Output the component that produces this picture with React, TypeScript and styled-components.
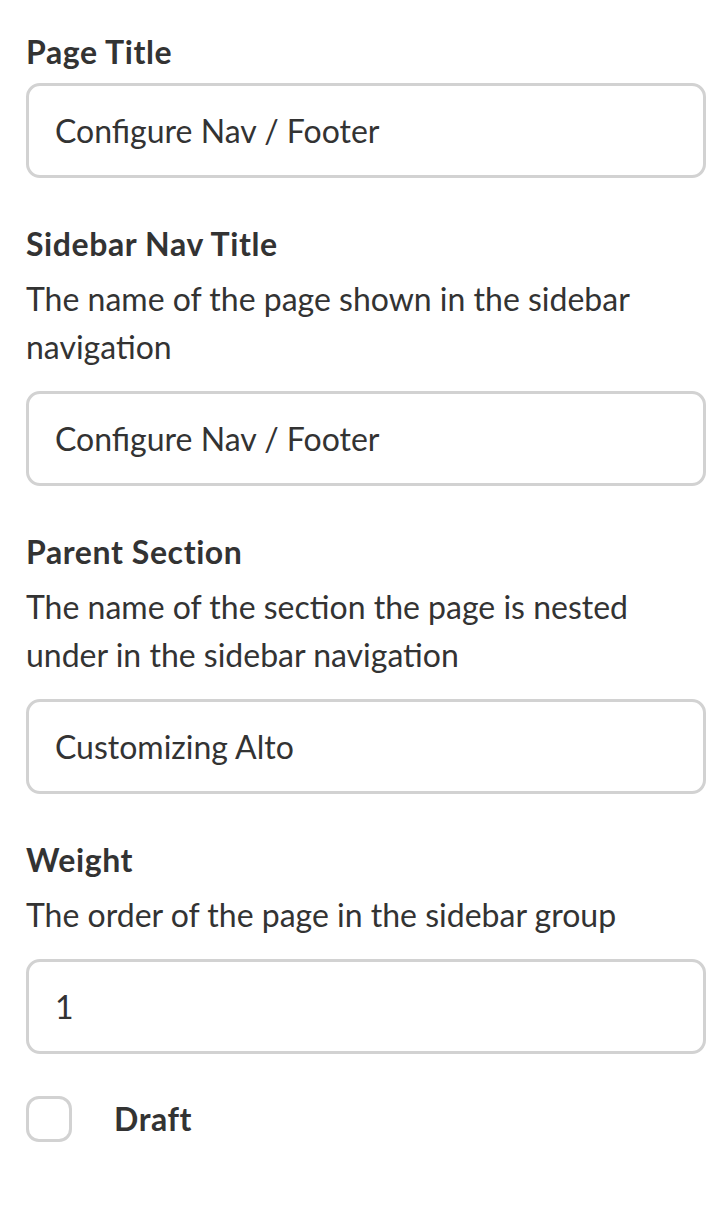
import React from "react";
import styled, { createGlobalStyle } from "styled-components";

const Global = createGlobalStyle`
  html, body { margin: 0; padding: 0; background: #ffffff; }
  body { font-family: Lato, "Noto Sans", sans-serif; color: #333333; }
`;

const Form = styled.form`
  padding: 28px 16px 40px 26px;
  display: flex;
  flex-direction: column;
  gap: 42px;
`;

const Field = styled.div`
  display: flex;
  flex-direction: column;
`;

const Label = styled.label`
  font-size: 32px;
  line-height: 48px;
  font-weight: 700;
  letter-spacing: 0.6px;
  color: #333333;
  margin-bottom: 7px;
`;

const Description = styled.p`
  margin: 0 0 20px;
  font-size: 32px;
  line-height: 48px;
  font-weight: 400;
  color: #333333;
`;

const Input = styled.input`
  box-sizing: border-box;
  width: 100%;
  height: 95px;
  border: 3px solid #d2d2d2;
  border-radius: 14px;
  padding: 0 26px;
  font-family: Lato, "Noto Sans", sans-serif;
  font-size: 32px;
  color: #333333;
  background: #ffffff;
  outline: none;
`;

const CheckRow = styled.label`
  display: flex;
  align-items: center;
  gap: 42px;
  margin-top: -1px;
`;

const Box = styled.input.attrs({ type: "checkbox" })`
  appearance: none;
  margin: 0;
  box-sizing: border-box;
  width: 46px;
  height: 46px;
  border: 3px solid #d2d2d2;
  border-radius: 13px;
  background: #ffffff;
`;

const CheckText = styled.span`
  font-size: 32px;
  line-height: 48px;
  font-weight: 700;
  letter-spacing: 0.6px;
`;

export default function App() {
  return (
    <>
      <Global />
      <Form onSubmit={(e) => e.preventDefault()}>
        <Field>
          <Label>Page Title</Label>
          <Input defaultValue="Configure Nav / Footer" />
        </Field>
        <Field>
          <Label>Sidebar Nav Title</Label>
          <Description>The name of the page shown in the sidebar navigation</Description>
          <Input defaultValue="Configure Nav / Footer" />
        </Field>
        <Field>
          <Label>Parent Section</Label>
          <Description>The name of the section the page is nested under in the sidebar navigation</Description>
          <Input defaultValue="Customizing Alto" />
        </Field>
        <Field>
          <Label>Weight</Label>
          <Description>The order of the page in the sidebar group</Description>
          <Input defaultValue="1" />
        </Field>
        <CheckRow>
          <Box />
          <CheckText>Draft</CheckText>
        </CheckRow>
      </Form>
    </>
  );
}
